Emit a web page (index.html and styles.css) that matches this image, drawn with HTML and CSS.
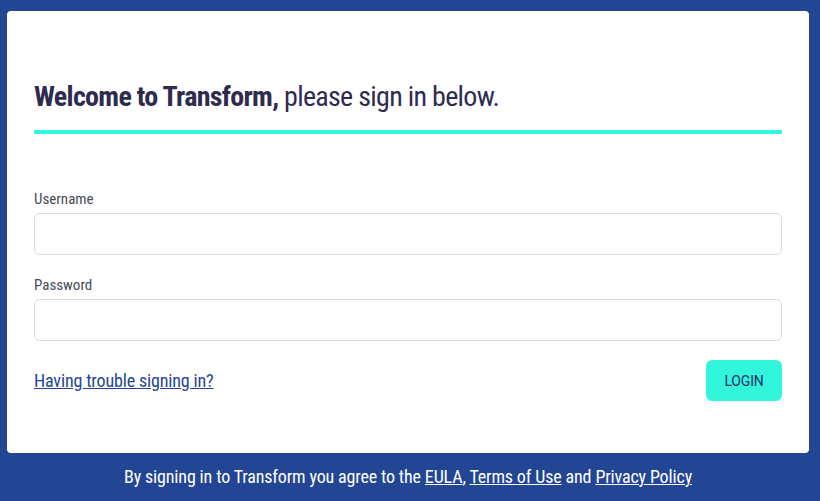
FILE: index.html
```html
<!DOCTYPE html>
<html>
    <head>
        <meta charset="utf-8">
        <title>Transform - Sign in</title>
        <link rel="stylesheet" href="styles.css">
    </head>
    <body>
        <div id="page">
            <form id="card">
                <h1 class="title"><b>Welcome to Transform,</b> please sign in below.</h1>
                <label class="field">
                    <span class="label">Username</span>
                    <input type="text" class="input">
                </label>
                <label class="field">
                    <span class="label">Password</span>
                    <input type="password" class="input">
                </label>
                <div class="actions">
                    <a href="#" class="trouble">Having trouble signing in?</a>
                    <button type="button" class="login">LOGIN</button>
                </div>
            </form>
            <div id="legal">
                By signing in to Transform you agree to the <a href="#">EULA</a>, <a href="#">Terms of Use</a> and <a href="#">Privacy Policy</a>
            </div>
        </div>
    </body>
</html>
```

FILE: styles.css
```css
html, body {
    height: 100%;
}
body {
    background-color: #224693;
    margin: 0;
    font-family: Roboto, "Liberation Sans", sans-serif;
    font-stretch: condensed;
    overflow: hidden;
}

#page {
    padding: 11px 11px 0 7px;
}

#card {
    background: white;
    border-radius: 4px;
    padding: 69px 27px 52px 27px;
    color: #2f2b4f;
}

.title {
    margin: 0 0 56px 0;
    padding-bottom: 16px;
    border-bottom: 4px solid #33f5dc;
    font-size: 28px;
    font-weight: 400;
    line-height: 34px;
    letter-spacing: -0.7px;
}
.title b {
    font-weight: 700;
}

.field {
    display: block;
    margin-bottom: 21px;
}
.label {
    display: block;
    font-size: 15px;
    line-height: 18px;
    color: #454b57;
    margin-bottom: 5px;
}
.input {
    display: block;
    box-sizing: border-box;
    width: 100%;
    height: 42px;
    border: 1px solid #d2dfe8;
    border-radius: 6px;
    background: white;
}

.actions {
    display: flex;
    justify-content: space-between;
    align-items: center;
    margin-top: -2px;
}
.trouble {
    color: #224693;
    font-size: 18px;
    letter-spacing: -0.15px;
}
.login {
    background: #33f5dc;
    border: none;
    border-radius: 6px;
    width: 76px;
    height: 41px;
    color: #1f3266;
    font-family: inherit;
    font-size: 14px;
    letter-spacing: -0.2px;
}

#legal {
    text-align: center;
    color: white;
    font-size: 18px;
    line-height: 48px;
    letter-spacing: -0.15px;
}
#legal a {
    color: white;
}
```
